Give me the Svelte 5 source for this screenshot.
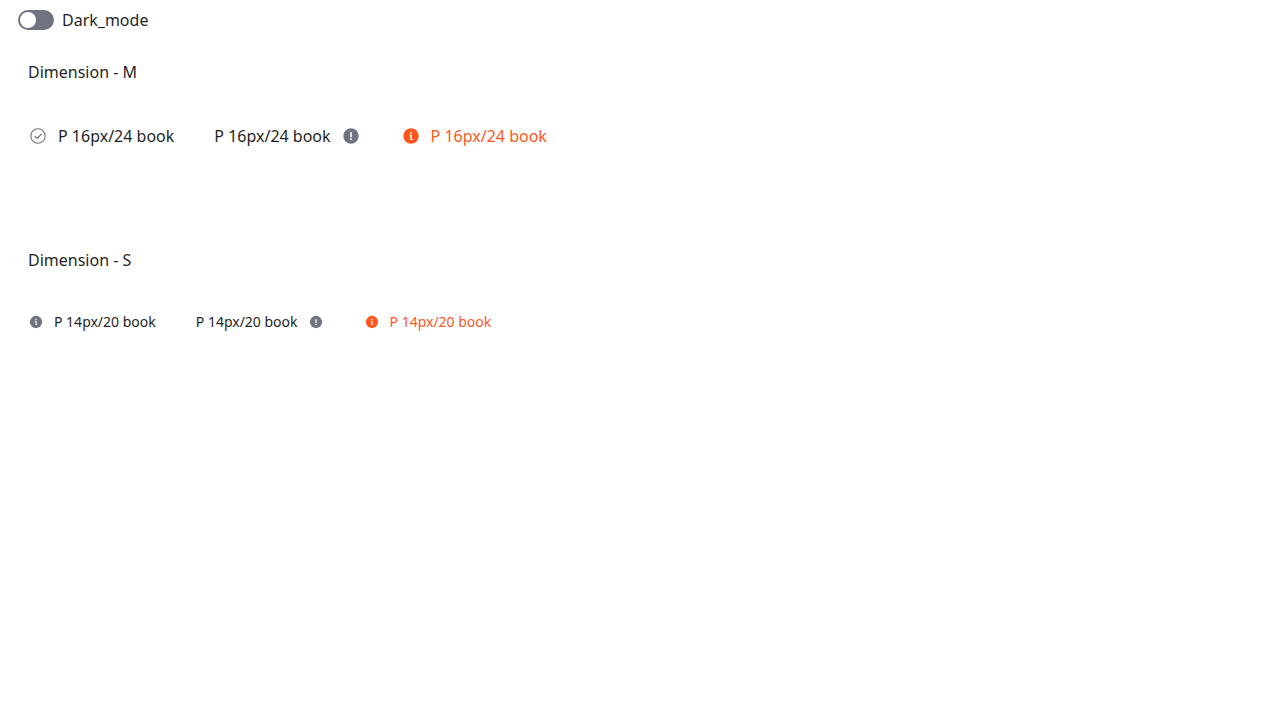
<script>
  let dark = $state(false);
  const groups = [
    { title: 'Dimension - M', size: 'm', text: 'P 16px/24 book', items: [['check', false, ''], ['alert', true, ''], ['info', false, 'accent']] },
    { title: 'Dimension - S', size: 's', text: 'P 14px/20 book', items: [['info', false, ''], ['alert', true, ''], ['info', false, 'accent']] }
  ];
</script>

{#snippet icon(kind)}
  <svg class="icon" viewBox="0 0 20 20" aria-hidden="true">
    {#if kind === 'check'}
      <circle cx="10" cy="10" r="7.2" fill="none" stroke="currentColor" stroke-width="1.1" />
      <path d="M6.6 9.9 9.2 12.4l4.3-4.4" fill="none" stroke="currentColor" stroke-width="1.2" />
    {:else}
      <circle cx="10" cy="10" r="7.7" fill="currentColor" />
      {#if kind === 'alert'}
        <path d="M10 6.2v5M10 12.3v1.6" stroke="#fff" stroke-width="1.6" fill="none" />
      {:else}
        <path d="M9.2 5.9h1.6v1.5H9.2zM8.6 8.4h2.1v4.5h1v1H9.3V9.4h-.7z" fill="#fff" />
      {/if}
    {/if}
  </svg>
{/snippet}

<main class:dark>
  <label class="switch"><input type="checkbox" role="switch" bind:checked={dark} /><span>Dark_mode</span></label>
  {#each groups as group}
    <section class={group.size}>
      <h2>{group.title}</h2>
      <div class="row">
        {#each group.items as [kind, end, tone]}
          <p class={tone} class:end>{@render icon(kind)}<span>{group.text}</span></p>
        {/each}
      </div>
    </section>
  {/each}
</main>

<style>
  :global(body) { margin: 0; background: #fff; }
  main { min-height: 100vh; box-sizing: border-box; padding: 8px 18px; color: #1f1f25; background: #fff; font: 16px/24px "Noto Sans", sans-serif; }
  main.dark { color: #fff; background: #171717; }
  .switch { display: flex; align-items: center; gap: 8px; }
  input { appearance: none; box-sizing: border-box; width: 36px; height: 20px; margin: 0; padding: 2px; border-radius: 10px; background: #707481; }
  input::before { content: ""; display: block; width: 16px; height: 16px; border-radius: 50%; background: #fff; }
  input:checked::before { margin-left: 16px; }
  section { padding: 28px 10px 72px; }
  h2 { margin: 0 0 40px; font: inherit; }
  .row { display: flex; gap: 40px; }
  p { display: flex; align-items: center; gap: 10px; margin: 0; }
  .end { flex-direction: row-reverse; }
  .icon { width: 20px; height: 20px; color: #707481; }
  .accent, .accent .icon { color: #fe581f; }
  .s .row { font-size: 14px; line-height: 20px; }
  .s .icon { width: 16px; height: 16px; }
</style>
